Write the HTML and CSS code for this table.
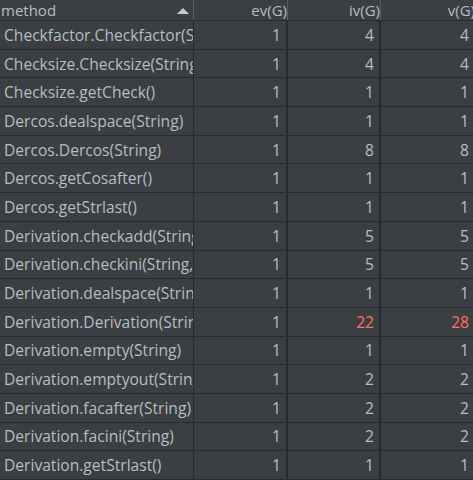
FILE: index.html
```html
<!DOCTYPE html>
<html>
<head>
<meta charset="utf-8">
<link rel="stylesheet" href="styles.css">
</head>
<body>
<div class="table">
  <div class="row head">
    <div class="hcell name">method<span class="sort"></span></div>
    <div class="hcell num">ev(G)</div>
    <div class="hcell num">iv(G)</div>
    <div class="hcell num last">v(G)</div>
  </div>
  <div class="row"><div class="cell name">Checkfactor.Checkfactor(String)</div><div class="cell num">1</div><div class="cell num">4</div><div class="cell num last">4</div></div>
  <div class="row"><div class="cell name">Checksize.Checksize(String)</div><div class="cell num">1</div><div class="cell num">4</div><div class="cell num last">4</div></div>
  <div class="row"><div class="cell name">Checksize.getCheck()</div><div class="cell num">1</div><div class="cell num">1</div><div class="cell num last">1</div></div>
  <div class="row"><div class="cell name">Dercos.dealspace(String)</div><div class="cell num">1</div><div class="cell num">1</div><div class="cell num last">1</div></div>
  <div class="row"><div class="cell name">Dercos.Dercos(String)</div><div class="cell num">1</div><div class="cell num">8</div><div class="cell num last">8</div></div>
  <div class="row"><div class="cell name">Dercos.getCosafter()</div><div class="cell num">1</div><div class="cell num">1</div><div class="cell num last">1</div></div>
  <div class="row"><div class="cell name">Dercos.getStrlast()</div><div class="cell num">1</div><div class="cell num">1</div><div class="cell num last">1</div></div>
  <div class="row"><div class="cell name">Derivation.checkadd(String)</div><div class="cell num">1</div><div class="cell num">5</div><div class="cell num last">5</div></div>
  <div class="row"><div class="cell name">Derivation.checkini(String,String)</div><div class="cell num">1</div><div class="cell num">5</div><div class="cell num last">5</div></div>
  <div class="row"><div class="cell name">Derivation.dealspace(String)</div><div class="cell num">1</div><div class="cell num">1</div><div class="cell num last">1</div></div>
  <div class="row"><div class="cell name">Derivation.Derivation(String)</div><div class="cell num">1</div><div class="cell num warn">22</div><div class="cell num last warn">28</div></div>
  <div class="row"><div class="cell name">Derivation.empty(String)</div><div class="cell num">1</div><div class="cell num">1</div><div class="cell num last">1</div></div>
  <div class="row"><div class="cell name">Derivation.emptyout(String)</div><div class="cell num">1</div><div class="cell num">2</div><div class="cell num last">2</div></div>
  <div class="row"><div class="cell name">Derivation.facafter(String)</div><div class="cell num">1</div><div class="cell num">2</div><div class="cell num last">2</div></div>
  <div class="row"><div class="cell name">Derivation.facini(String)</div><div class="cell num">1</div><div class="cell num">2</div><div class="cell num last">2</div></div>
  <div class="row"><div class="cell name">Derivation.getStrlast()</div><div class="cell num">1</div><div class="cell num">1</div><div class="cell num last">1</div></div>
</div>
</body>
</html>
```
FILE: styles.css
```css
html, body {
  margin: 0;
  padding: 0;
  background: #3c3f41;
  overflow: hidden;
}
body {
  font-family: "Open Sans", "Noto Sans", sans-serif;
  font-size: 15.6px;
  color: #b4bcc4;
}
.table {
  width: 475px;
}
.row {
  display: grid;
  grid-template-columns: 194px 94px 93px 94px;
  box-sizing: border-box;
  height: 28.69px;
  border-bottom: 1px solid #2b2b2b;
}
.row.head {
  height: 21px;
  font-size: 15px;
  border-bottom: 1px solid #2b2b2b;
}
.cell, .hcell {
  display: flex;
  align-items: center;
  white-space: nowrap;
  overflow: hidden;
  box-sizing: border-box;
}
.cell {
  border-right: 2px solid #2b2b2b;
}
.cell.name {
  border-right-width: 1px;
  padding-left: 4px;
}
.cell.num {
  justify-content: flex-end;
  padding-right: 5px;
}
.cell.last {
  border-right: none;
  padding-right: 6px;
}
.hcell {
  border-right: 1px solid #5a5d5f;
  position: relative;
}
.hcell.name {
  padding-left: 1px;
}
.hcell.num {
  justify-content: flex-end;
  padding-right: 0;
}
.hcell.last {
  border-right: none;
}
.sort {
  position: absolute;
  right: 4px;
  top: 8px;
  width: 0;
  height: 0;
  border-left: 6px solid transparent;
  border-right: 6px solid transparent;
  border-bottom: 6px solid #c8c8c8;
}
.warn {
  color: #ff6b68;
}
```
